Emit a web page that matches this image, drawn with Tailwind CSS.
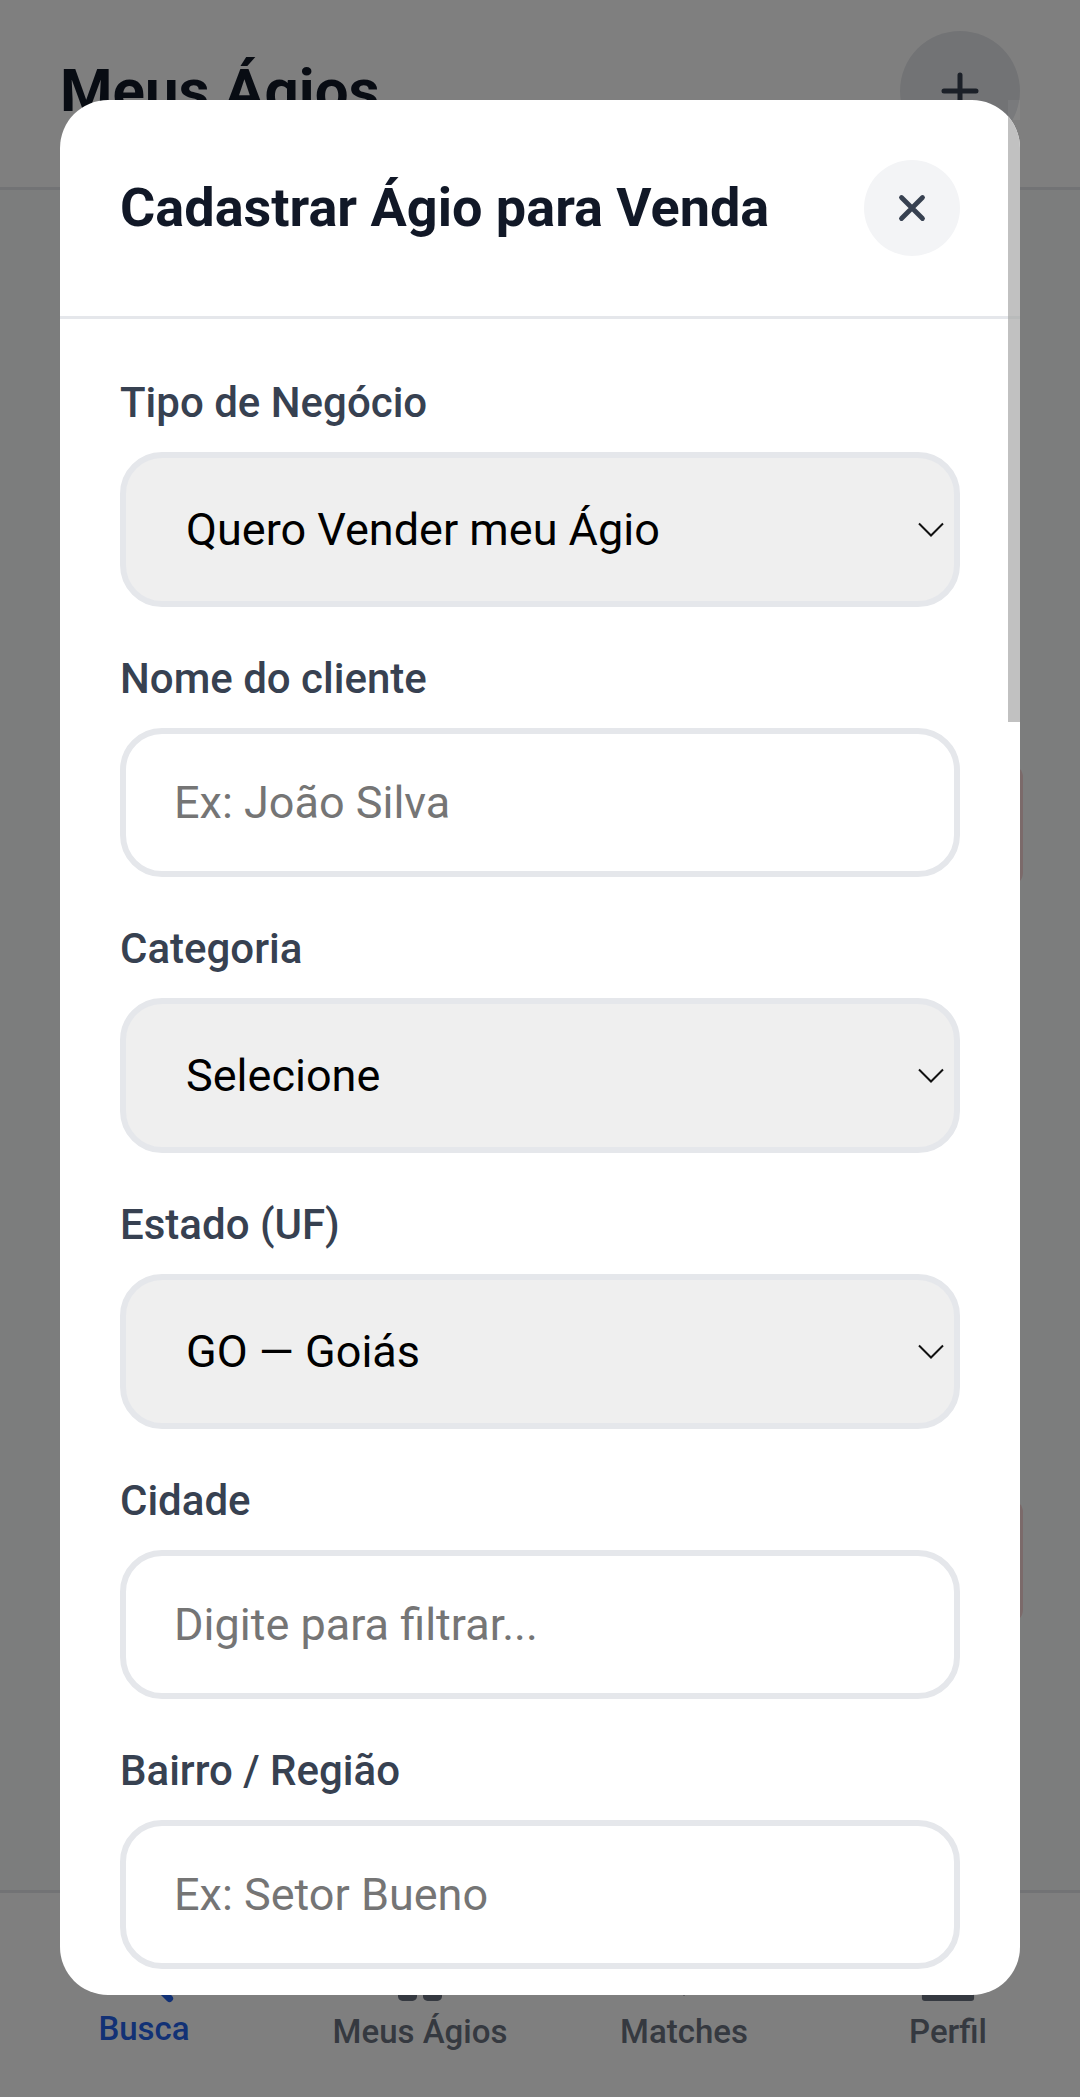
<!DOCTYPE html>
<html lang="pt-BR">
<head>
  <meta charset="UTF-8" />
  <meta name="viewport" content="width=device-width, initial-scale=1.0" />
  <script src="https://cdn.jsdelivr.net/npm/@tailwindcss/browser@4"></script>
</head>
<body class="font-['Roboto',sans-serif]">
  <div class="relative w-[1080px] h-[2097px] overflow-hidden bg-white">
    <!-- pagina de fundo -->
    <div class="flex flex-col h-full">
      <header class="flex items-start justify-between h-[190px] pt-[31px] px-[60px] border-b-[3px] border-gray-200">
        <h1 class="text-[60px] font-bold text-[#111827] leading-[120px]">Meus Ágios</h1>
        <div class="flex items-center justify-center w-[120px] h-[120px] rounded-full bg-gray-200">
          <svg width="48" height="48" viewBox="0 0 48 48" fill="none" stroke="#374151" stroke-width="5" stroke-linecap="round"><path d="M24 8v32M8 24h32"/></svg>
        </div>
      </header>
      <main class="flex-1 flex flex-col items-end pr-[57px] bg-[#f9fafb]">
        <div class="mt-[575px] w-[963px] h-[120px] rounded-[12px] bg-[#f6d4d4]"></div>
        <div class="mt-[615px] w-[963px] h-[122px] rounded-[12px] bg-[#f6d4d4]"></div>
      </main>
      <nav class="grid grid-cols-[288px_264px_264px_264px] h-[207px] border-t-[3px] border-gray-200 bg-white text-[33px] font-medium text-[#6b7280]">
        <div class="flex flex-col items-center pt-[44px] text-[#2563eb]">
          <svg width="72" height="72" viewBox="0 0 24 24" fill="none" stroke="currentColor" stroke-width="2.4" stroke-linecap="round"><circle cx="11" cy="11" r="7"/><path d="M16.5 16.5L20.5 20.5"/></svg>
          <span class="-mt-[2px] leading-[44px]">Busca</span>
        </div>
        <div class="flex flex-col items-center pt-[44px]">
          <svg width="72" height="72" viewBox="0 0 24 24" fill="currentColor"><rect x="4.67" y="3" width="6.33" height="6.5" rx="1.5"/><rect x="13" y="3" width="6.33" height="6.5" rx="1.5"/><rect x="4.67" y="14" width="6.33" height="7.3" rx="1.5"/><rect x="13" y="14" width="6.33" height="7.3" rx="1.5"/></svg>
          <span class="mt-[1px] leading-[44px]">Meus Ágios</span>
        </div>
        <div class="flex flex-col items-center pt-[44px]">
          <svg width="72" height="72" viewBox="0 0 24 24" fill="currentColor"><path d="M12 19.7L4 11a4.5 4.5 0 0 1 8-4 4.5 4.5 0 0 1 8 4z"/></svg>
          <span class="mt-[1px] leading-[44px]">Matches</span>
        </div>
        <div class="flex flex-col items-center pt-[44px]">
          <svg width="72" height="72" viewBox="0 0 24 24" fill="currentColor"><circle cx="12" cy="8" r="4"/><rect x="3.3" y="14" width="17.4" height="7.3" rx="1"/></svg>
          <span class="mt-[1px] leading-[44px]">Perfil</span>
        </div>
      </nav>
    </div>
    <!-- overlay -->
    <div class="absolute inset-0 bg-black/50"></div>
    <div class="absolute left-[1008px] top-[100px] w-[12px] h-[20px] bg-white/5"></div>
    <!-- modal -->
    <div class="absolute left-[60px] top-[100px] w-[960px] h-[1895px] rounded-[48px] bg-white overflow-hidden">
      <div class="absolute right-0 top-0 w-[12px] h-[622px] bg-[#c1c1c1]"></div>
      <div class="absolute right-0 top-[216px] w-[12px] h-[3px] bg-[#b9bbbb]"></div>
      <div class="flex items-center justify-between h-[219px] px-[60px] border-b-[3px] border-gray-200">
        <h2 class="mb-[2px] text-[54px] font-bold text-[#111827]">Cadastrar Ágio para Venda</h2>
        <button class="flex items-center justify-center w-[96px] h-[96px] rounded-full bg-gray-100">
          <svg width="36" height="36" viewBox="0 0 24 24" fill="none" stroke="#374151" stroke-width="3.2" stroke-linecap="round"><path d="M5 5l14 14M19 5L5 19"/></svg>
        </button>
      </div>
      <form class="flex flex-col px-[60px] pt-[60px]">
        <label class="text-[42px] font-medium text-[#374151] leading-[48px]">Tipo de Negócio</label>
        <div class="mt-[25px] flex items-center justify-between h-[155px] pl-[60px] pr-[10px] rounded-[42px] border-[6px] border-gray-200 bg-[#efefef] text-[45px] text-black">
          Quero Vender meu Ágio
          <svg width="26" height="16" viewBox="0 0 26 16" fill="none" stroke="#111" stroke-width="2"><path d="M1 1.5l12 12 12-12"/></svg>
        </div>
        <label class="mt-[48px] text-[42px] font-medium text-[#374151] leading-[48px]">Nome do cliente</label>
        <div class="mt-[25px] flex items-center h-[149px] pl-[48px] rounded-[42px] border-[6px] border-gray-200 text-[45px] text-[#757575]">Ex: João Silva</div>
        <label class="mt-[48px] text-[42px] font-medium text-[#374151] leading-[48px]">Categoria</label>
        <div class="mt-[25px] flex items-center justify-between h-[155px] pl-[60px] pr-[10px] rounded-[42px] border-[6px] border-gray-200 bg-[#efefef] text-[45px] text-black">
          Selecione
          <svg width="26" height="16" viewBox="0 0 26 16" fill="none" stroke="#111" stroke-width="2"><path d="M1 1.5l12 12 12-12"/></svg>
        </div>
        <label class="mt-[48px] text-[42px] font-medium text-[#374151] leading-[48px]">Estado (UF)</label>
        <div class="mt-[25px] flex items-center justify-between h-[155px] pl-[60px] pr-[10px] rounded-[42px] border-[6px] border-gray-200 bg-[#efefef] text-[45px] text-black">
          GO — Goiás
          <svg width="26" height="16" viewBox="0 0 26 16" fill="none" stroke="#111" stroke-width="2"><path d="M1 1.5l12 12 12-12"/></svg>
        </div>
        <label class="mt-[48px] text-[42px] font-medium text-[#374151] leading-[48px]">Cidade</label>
        <div class="mt-[25px] flex items-center h-[149px] pl-[48px] rounded-[42px] border-[6px] border-gray-200 text-[45px] text-[#757575]">Digite para filtrar...</div>
        <label class="mt-[48px] text-[42px] font-medium text-[#374151] leading-[48px]">Bairro / Região</label>
        <div class="mt-[25px] flex items-center h-[149px] pl-[48px] rounded-[42px] border-[6px] border-gray-200 text-[45px] text-[#757575]">Ex: Setor Bueno</div>
      </form>
    </div>
  </div>
</body>
</html>
